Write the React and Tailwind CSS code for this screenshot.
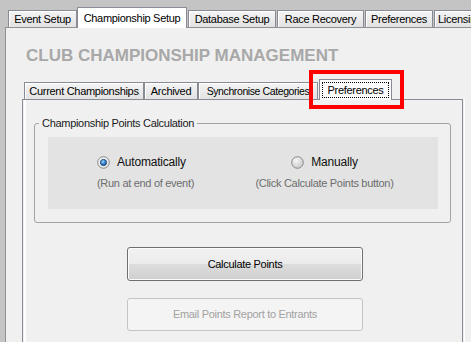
import React from "react";

function OuterTab({ className, children }) {
  return (
    <div
      className={
        "h-[17px] shrink-0 flex items-center justify-center border border-b-0 border-[#898c95] bg-[linear-gradient(#f4f4f4,#e2e2e2)] shadow-[inset_1px_1px_0_#ffffff] leading-none whitespace-nowrap overflow-hidden " +
        className
      }
    >
      {children}
    </div>
  );
}

function Radio({ checked }) {
  return (
    <svg width="13" height="13" viewBox="0 0 13 13" className="shrink-0">
      <defs>
        <radialGradient id="rOn" cx="0.45" cy="0.4" r="0.7">
          <stop offset="0" stopColor="#ffffff" />
          <stop offset="0.6" stopColor="#f0f0f0" />
          <stop offset="1" stopColor="#cfcfcf" />
        </radialGradient>
        <radialGradient id="rOff" cx="0.4" cy="0.35" r="0.75">
          <stop offset="0" stopColor="#f6f6f6" />
          <stop offset="1" stopColor="#c4c4c4" />
        </radialGradient>
        <radialGradient id="dot" cx="0.4" cy="0.35" r="0.7">
          <stop offset="0" stopColor="#9fd8ff" />
          <stop offset="0.5" stopColor="#3a8ad6" />
          <stop offset="1" stopColor="#174f8f" />
        </radialGradient>
      </defs>
      <circle
        cx="6.5"
        cy="6.5"
        r="5.8"
        fill={checked ? "url(#rOn)" : "url(#rOff)"}
        stroke="#8b8b8b"
        strokeWidth="1"
      />
      {checked && (
        <circle cx="6.5" cy="6.5" r="3.1" fill="url(#dot)" stroke="#1c3f6c" strokeWidth="0.9" />
      )}
    </svg>
  );
}

export default function App() {
  return (
    <div className="relative w-[471px] h-[342px] overflow-hidden bg-[#c4c4c4] flex flex-col font-['Liberation_Sans',Arial,sans-serif] text-[11px] tracking-[-0.3px] text-black">
      {/* top tab strip */}
      <div className="h-[27px] shrink-0 flex items-end pl-[8px]">
        <OuterTab className="w-[69px]">Event Setup</OuterTab>
        <div className="relative z-10 -mb-px h-[21px] w-[110px] shrink-0 flex items-center justify-center border border-b-0 border-[#898c95] bg-white leading-none whitespace-nowrap">
          Championship Setup
        </div>
        <OuterTab className="w-[88px] ml-px">Database Setup</OuterTab>
        <OuterTab className="w-[87px] ml-px">Race Recovery</OuterTab>
        <OuterTab className="w-[68px] ml-px">Preferences</OuterTab>
        <OuterTab className="w-[70px] ml-px justify-start pl-[3px]">Licensing</OuterTab>
      </div>

      {/* outer tab page */}
      <div className="flex-1 ml-[5px] w-[520px] border-l border-t border-[#8f9094] bg-[#f0f0f0] flex flex-col">
        <div className="mt-[18px] ml-[20px] text-[17px] leading-[20px] font-bold tracking-normal text-[#a8a8a8] whitespace-nowrap">
          CLUB CHAMPIONSHIP MANAGEMENT
        </div>

        {/* inner tab control */}
        <div className="mt-[13px] ml-[16px] w-[441px] flex flex-col">
          <div className="h-[20px] flex items-end pl-[2px]">
            <OuterTab className="w-[120px]">Current Championships</OuterTab>
            <OuterTab className="w-[54px]">Archived</OuterTab>
            <OuterTab className="w-[120px] text-[10.5px] tracking-[-0.4px]">Synchronise Categories</OuterTab>
            <div className="relative z-10 -mb-px ml-px h-[21px] w-[73px] shrink-0 flex items-center justify-center border border-b-0 border-[#898c95] bg-[#fbfbfb] leading-none">
              <div className="h-[16px] w-[67px] border border-dotted border-black flex items-center justify-center whitespace-nowrap">
                Preferences
              </div>
            </div>
          </div>

          <div className="h-[300px] border border-[#898c95] bg-[#f0f0f0] shadow-[inset_1px_0_0_#f0f0f0,inset_3px_0_0_#ffffff,1px_0_0_#f0f0f0,2px_0_0_#ffffff] flex flex-col">
            <fieldset className="mt-[16px] ml-[11px] w-[417px] border border-[#a3a3a3] rounded-[3px] pb-[13px] pt-[7px]">
              <legend className="ml-[4px] px-[3px] leading-[14px] text-[11px] text-[#1a1a1a]">
                Championship Points Calculation
              </legend>
              <div className="ml-[13px] mr-[12px] h-[72px] bg-[#e3e3e3] flex">
                <div className="ml-[49px] w-[157px] flex flex-col items-start pt-[18px]">
                  <div className="flex items-center gap-[7px] h-[14px]">
                    <Radio checked />
                    <span className="text-[12px] leading-[14px] tracking-[-0.2px] text-[#111]">Automatically</span>
                  </div>
                  <div className="mt-[7px] leading-[14px] text-[#6d6d6d] whitespace-nowrap">
                    (Run at end of event)
                  </div>
                </div>
                <div className="w-[141px] flex flex-col items-center pt-[18px]">
                  <div className="flex items-center gap-[7px] h-[14px]">
                    <Radio checked={false} />
                    <span className="text-[12px] leading-[14px] tracking-[-0.2px] text-[#111]">Manually</span>
                  </div>
                  <div className="mt-[7px] leading-[14px] text-[#6d6d6d] whitespace-nowrap">
                    (Click Calculate Points button)
                  </div>
                </div>
              </div>
            </fieldset>

            <button className="mt-[24px] ml-[104px] w-[236px] h-[34px] rounded-[3px] border border-[#707070] bg-[linear-gradient(#f2f2f2_0%,#ebebeb_50%,#dddddd_50%,#cfcfcf_100%)] shadow-[inset_0_0_0_1px_#fbfbfb] flex items-center justify-center text-black">
              Calculate Points
            </button>
            <button className="mt-[17px] ml-[104px] w-[236px] h-[33px] rounded-[3px] border border-[#c2c4c6] bg-[#f4f4f4] flex items-center justify-center text-[#a2a2a2]">
              Email Points Report to Entrants
            </button>
          </div>
        </div>
      </div>

      {/* red highlight annotation */}
      <div className="absolute left-[309px] top-[70px] w-[95px] h-[39px] border-[4px] border-[#ff0000] z-20 pointer-events-none" />
    </div>
  );
}
